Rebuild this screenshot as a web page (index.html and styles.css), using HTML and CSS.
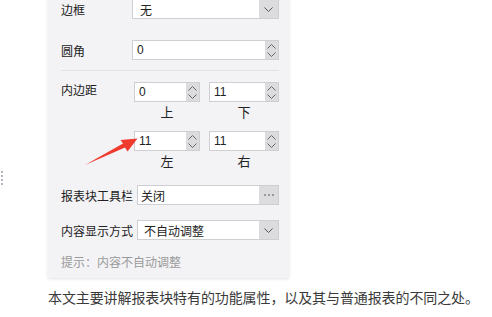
FILE: index.html
```html
<!DOCTYPE html>
<html lang="zh-CN">
<head>
    <meta charset="UTF-8">
    <meta name="viewport" content="width=device-width, initial-scale=1.0">
    <title>报表块属性</title>
    <link rel="stylesheet" href="styles.css">
</head>
<body>
    <div class="handle">
        <span></span><span></span><span></span><span></span>
    </div>
    <div class="panel">
        <div class="row">
            <label class="label">边框</label>
            <div class="field select">
                <span class="value pad-7">无</span>
                <span class="btn"><svg width="9" height="5" viewBox="0 0 9 5"><path d="M0.5 0.5 L4.5 4.5 L8.5 0.5" fill="none" stroke="#555" stroke-width="1"/></svg></span>
            </div>
        </div>
        <div class="row">
            <label class="label">圆角</label>
            <div class="field number">
                <span class="value">0</span>
                <span class="spin">
                    <svg width="9" height="5" viewBox="0 0 9 5"><path d="M0.5 4.5 L4.5 0.5 L8.5 4.5" fill="none" stroke="#666" stroke-width="1"/></svg>
                    <svg width="9" height="5" viewBox="0 0 9 5"><path d="M0.5 0.5 L4.5 4.5 L8.5 0.5" fill="none" stroke="#666" stroke-width="1"/></svg>
                </span>
            </div>
        </div>
        <div class="divider"></div>
        <div class="padding-block">
            <label class="label">内边距</label>
            <div class="pad-grid">
                <div class="field number">
                    <span class="value">0</span>
                    <span class="spin">
                        <svg width="9" height="5" viewBox="0 0 9 5"><path d="M0.5 4.5 L4.5 0.5 L8.5 4.5" fill="none" stroke="#666" stroke-width="1"/></svg>
                        <svg width="9" height="5" viewBox="0 0 9 5"><path d="M0.5 0.5 L4.5 4.5 L8.5 0.5" fill="none" stroke="#666" stroke-width="1"/></svg>
                    </span>
                </div>
                <div class="field number">
                    <span class="value">11</span>
                    <span class="spin">
                        <svg width="9" height="5" viewBox="0 0 9 5"><path d="M0.5 4.5 L4.5 0.5 L8.5 4.5" fill="none" stroke="#666" stroke-width="1"/></svg>
                        <svg width="9" height="5" viewBox="0 0 9 5"><path d="M0.5 0.5 L4.5 4.5 L8.5 0.5" fill="none" stroke="#666" stroke-width="1"/></svg>
                    </span>
                </div>
                <div class="caption">上</div>
                <div class="caption">下</div>
                <div class="field number">
                    <span class="value">11</span>
                    <span class="spin">
                        <svg width="9" height="5" viewBox="0 0 9 5"><path d="M0.5 4.5 L4.5 0.5 L8.5 4.5" fill="none" stroke="#666" stroke-width="1"/></svg>
                        <svg width="9" height="5" viewBox="0 0 9 5"><path d="M0.5 0.5 L4.5 4.5 L8.5 0.5" fill="none" stroke="#666" stroke-width="1"/></svg>
                    </span>
                </div>
                <div class="field number">
                    <span class="value">11</span>
                    <span class="spin">
                        <svg width="9" height="5" viewBox="0 0 9 5"><path d="M0.5 4.5 L4.5 0.5 L8.5 4.5" fill="none" stroke="#666" stroke-width="1"/></svg>
                        <svg width="9" height="5" viewBox="0 0 9 5"><path d="M0.5 0.5 L4.5 4.5 L8.5 0.5" fill="none" stroke="#666" stroke-width="1"/></svg>
                    </span>
                </div>
                <div class="caption">左</div>
                <div class="caption">右</div>
            </div>
        </div>
        <div class="row wide">
            <label class="label">报表块工具栏</label>
            <div class="field select">
                <span class="value pad-3">关闭</span>
                <span class="btn dots"><i></i><i></i><i></i></span>
            </div>
        </div>
        <div class="row wide">
            <label class="label">内容显示方式</label>
            <div class="field select">
                <span class="value pad-6">不自动调整</span>
                <span class="btn"><svg width="9" height="5" viewBox="0 0 9 5"><path d="M0.5 0.5 L4.5 4.5 L8.5 0.5" fill="none" stroke="#555" stroke-width="1"/></svg></span>
            </div>
        </div>
        <p class="hint">提示：内容不自动调整</p>
    </div>
    <p class="intro">本文主要讲解报表块特有的功能属性，以及其与普通报表的不同之处。</p>

    <svg class="arrow" width="492" height="317" viewBox="0 0 492 317">
        <polygon points="85,165 123,143.6 120.5,140 137.5,138.5 127.5,151.5 125,147.6" fill="#ef3a2e"/>
    </svg>
</body>
</html>
```

FILE: styles.css
```css
body {
    margin: 0;
    background-color: #fff;
    font-family: "Liberation Sans", "Noto Sans CJK SC", sans-serif;
    color: #222;
    overflow: hidden;
    position: relative;
    height: 317px;
}
.handle {
    position: absolute;
    left: 1px;
    top: 171px;
    display: flex;
    flex-direction: column;
    gap: 2px;
}
.handle span {
    width: 2px;
    height: 2px;
    background-color: #b2b6be;
}
.panel {
    margin: -13px 0 0 48px;
    width: 241px;
    box-sizing: border-box;
    padding: 12px 10px 7px 13px;
    background-color: #f3f3f6;
    box-shadow: 0 1px 3px rgba(0,0,0,0.12);
    font-size: 12px;
}
.row {
    display: flex;
    align-items: center;
    height: 20px;
    margin-bottom: 21px;
}
.label {
    width: 71px;
    flex-shrink: 0;
    color: #222;
}
.wide {
    margin-bottom: 15px;
}
.wide .label {
    width: auto;
    margin-right: 4px;
}
.field {
    flex: 1;
    height: 20px;
    box-sizing: border-box;
    border: 1px solid #cfcfd3;
    background-color: #fff;
    display: flex;
    align-items: stretch;
}
.value {
    flex: 1;
    display: flex;
    align-items: center;
    padding-left: 4px;
    font-size: 12px;
}
.value.pad-7 {
    padding-left: 7px;
}
.value.pad-6 {
    padding-left: 6px;
}
.value.pad-3 {
    padding-left: 3px;
}
.btn {
    width: 19px;
    background-color: #dcdcdf;
    display: flex;
    align-items: center;
    justify-content: center;
}
.dots {
    gap: 2px;
}
.dots i {
    width: 2px;
    height: 2px;
    background-color: #999;
}
.spin {
    width: 13px;
    background-color: #dcdcdf;
    display: flex;
    flex-direction: column;
    align-items: center;
    justify-content: center;
    gap: 3px;
}
.divider {
    height: 1px;
    background-color: #e2e2e6;
    margin: -11px 0 11px 0;
}
.padding-block {
    display: flex;
    align-items: flex-start;
    margin-bottom: 13px;
}
.padding-block .label {
    width: 73px;
    line-height: 16px;
    padding-top: 1px;
}
.pad-grid {
    display: grid;
    grid-template-columns: 66px 70px;
    column-gap: 9px;
}
.caption {
    height: 21px;
    line-height: 21px;
    text-align: center;
    font-size: 13px;
}
.pad-grid .caption:nth-child(4) {
    margin-bottom: 8px;
}
.hint {
    margin: 13px 0 0 0;
    line-height: 16px;
    color: #9a9a9a;
}
.intro {
    margin: 9px 0 0 48px;
    font-size: 14px;
    line-height: 20px;
    letter-spacing: -0.1px;
    color: #3a3a3a;
    font-family: "Noto Sans CJK SC", sans-serif;
}
.arrow {
    position: absolute;
    left: 0;
    top: 0;
    pointer-events: none;
}
```
